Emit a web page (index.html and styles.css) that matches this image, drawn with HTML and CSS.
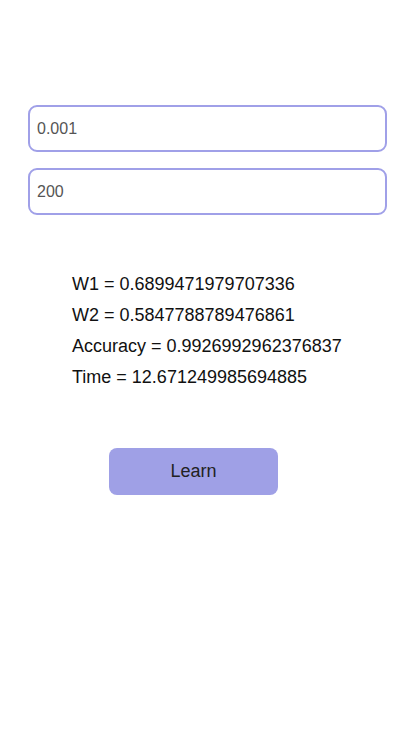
FILE: index.html
```html
<!DOCTYPE html>
<html>
<head>
<meta charset="utf-8">
<link rel="stylesheet" href="styles.css">
</head>
<body>
<div class="page">
  <div class="fields">
    <input class="field" type="text" value="0.001">
    <input class="field" type="text" value="200">
  </div>
  <div class="results">
    <div class="line">W1 = 0.6899471979707336</div>
    <div class="line">W2 = 0.5847788789476861</div>
    <div class="line">Accuracy = 0.9926992962376837</div>
    <div class="line">Time = 12.671249985694885</div>
  </div>
  <button class="learn">Learn</button>
</div>
</body>
</html>
```
FILE: styles.css
```css
html, body {
  margin: 0;
  padding: 0;
  background: #ffffff;
  font-family: "Liberation Sans", Arial, sans-serif;
}
.page {
  width: 414px;
  height: 736px;
  display: flex;
  flex-direction: column;
}
.fields {
  display: flex;
  flex-direction: column;
  gap: 16px;
  padding: 105px 28px 0 28px;
}
.field {
  box-sizing: border-box;
  width: 359px;
  height: 47px;
  margin: 0;
  border: 2px solid #a0a0e8;
  border-radius: 9px;
  padding: 0 0 0 7px;
  font-family: "Liberation Sans", Arial, sans-serif;
  font-size: 16px;
  color: #555555;
  background: #ffffff;
  outline: none;
}
.results {
  display: flex;
  flex-direction: column;
  padding: 54px 0 0 72px;
}
.line {
  font-size: 18px;
  line-height: 31px;
  color: #111111;
}
.learn {
  margin: 55px 0 0 109px;
  width: 169px;
  height: 47px;
  border: none;
  border-radius: 8px;
  background: #9fa0e6;
  color: #222222;
  font-family: "Liberation Sans", Arial, sans-serif;
  font-size: 18px;
  padding: 0;
}
```
